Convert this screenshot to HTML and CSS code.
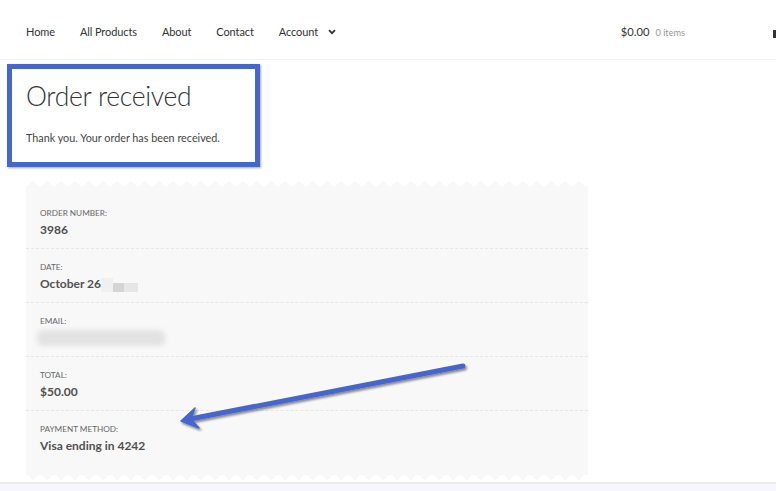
FILE: index.html
```html
<!DOCTYPE html>
<html>
<head>
<meta charset="utf-8">
<link rel="stylesheet" href="styles.css">
</head>
<body>
<header class="site-header">
  <nav class="nav">
    <a class="nav-item">Home</a>
    <a class="nav-item">All Products</a>
    <a class="nav-item">About</a>
    <a class="nav-item">Contact</a>
    <a class="nav-item nav-account">Account
      <svg class="chev" width="8" height="6" viewBox="0 0 8 6"><path d="M1 1.2 L4 4.2 L7 1.2" fill="none" stroke="#333" stroke-width="1.8"/></svg>
    </a>
  </nav>
  <div class="cart">
    <span class="cart-amount">$0.00</span>
    <span class="cart-count">0 items</span>
  </div>
  <span class="cart-icon"></span>
</header>

<main class="content">
  <div class="highlight">
    <h1 class="title">Order received</h1>
    <p class="thanks">Thank you. Your order has been received.</p>
  </div>

  <section class="receipt">
    <div class="row">
      <div class="label">Order number:</div>
      <div class="value">3986</div>
    </div>
    <div class="row">
      <div class="label">Date:</div>
      <div class="value">October 26<span class="pix"><i class="p1"></i><i class="p2"></i><i class="p3"></i></span></div>
    </div>
    <div class="row">
      <div class="label">Email:</div>
      <div class="value"><span class="blur"></span></div>
    </div>
    <div class="row">
      <div class="label">Total:</div>
      <div class="value">$50.00</div>
    </div>
    <div class="row">
      <div class="label">Payment method:</div>
      <div class="value">Visa ending in 4242</div>
    </div>
  </section>
</main>

<footer class="footer"></footer>

<svg class="arrow" width="776" height="491" viewBox="0 0 776 491">
  <defs>
    <filter id="sh" x="-10%" y="-10%" width="130%" height="140%">
      <feDropShadow dx="1.5" dy="2" stdDeviation="1.2" flood-color="#000" flood-opacity="0.45"/>
    </filter>
  </defs>
  <g filter="url(#sh)">
    <line x1="463" y1="366" x2="190" y2="419" stroke="#4766cc" stroke-width="5" stroke-linecap="round"/>
    <path d="M181 421 L195 408 L191 419 L199 428 Z" fill="#4766cc" stroke="#4766cc" stroke-width="1.5" stroke-linejoin="round"/>
  </g>
</svg>
</body>
</html>
```

FILE: styles.css
```css
* { box-sizing: border-box; }
html, body { margin: 0; padding: 0; }
body {
  width: 776px;
  height: 491px;
  overflow: hidden;
  background: #fff;
  font-family: "Lato", "Open Sans", "Liberation Sans", sans-serif;
  color: #333;
  position: relative;
}

.site-header {
  height: 60px;
  border-bottom: 1px solid #f0f0f0;
  display: flex;
  align-items: center;
  padding-left: 26px;
  padding-top: 4px;
}
.nav {
  display: flex;
  align-items: center;
  gap: 25px;
}
.nav-item {
  font-size: 11px;
  letter-spacing: -0.1px;
  color: #333;
  text-decoration: none;
  display: flex;
  align-items: center;
}
.chev { margin-left: 10px; }
.cart {
  margin-left: auto;
  display: flex;
  align-items: baseline;
  gap: 6px;
  margin-right: 88px;
}
.cart-amount { font-size: 11.2px; color: #333; }
.cart-count { font-size: 9.2px; color: #999; }
.cart-icon {
  width: 3px;
  height: 8px;
  background: #333;
  margin-top: 4px;
}

.content {
  padding: 4px 0 0 7px;
}
.highlight {
  width: 253px;
  height: 103px;
  border: 5px solid #4766cc;
  box-shadow: 1px 1px 2px rgba(0,0,0,0.35);
  padding: 9px 0 0 14px;
}
.title {
  margin: 0;
  font-size: 26.5px;
  font-weight: 300;
  line-height: 36px;
  color: #333;
  letter-spacing: -0.3px;
}
.thanks {
  margin: 16px 0 0;
  font-size: 10.8px;
  line-height: 16px;
  color: #444;
}

.receipt {
  margin: 20px 0 0 19px;
  width: 562px;
  background: #f8f8f8;
  position: relative;
  padding: 5px 0 6px;
}
.receipt::before,
.receipt::after {
  content: "";
  position: absolute;
  left: 0;
  right: 0;
  height: 6px;
  background-size: 14px 6px;
  background-repeat: repeat-x;
}
.receipt::before {
  top: -6px;
  background-image: conic-gradient(from 130deg at 50% 0%, #f8f8f8 100deg, transparent 0);
}
.receipt::after {
  bottom: -6px;
  background-image: conic-gradient(from -50deg at 50% 100%, #f8f8f8 100deg, transparent 0);
}

.row {
  padding: 12px 14px 8px;
  border-top: 1px dashed #e6e6e6;
}
.row:first-child {
  border-top: none;
  padding-top: 15px;
}
.row:last-child { padding-bottom: 12px; }
.label {
  font-size: 8.2px;
  line-height: 12px;
  text-transform: uppercase;
  color: #666;
}
.value {
  font-size: 12px;
  line-height: 20px;
  font-weight: 700;
  color: #505050;
  margin-top: 1px;
  display: flex;
  align-items: center;
}
.pix {
  display: inline-flex;
  align-items: flex-end;
  margin-left: 0;
  height: 16px;
}
.pix i { display: block; }
.pix .p1 { width: 12px; height: 14px; background: #f0f0f0; }
.pix .p2 { width: 11px; height: 9px; background: #d4d4d4; }
.pix .p3 { width: 14px; height: 9px; background: #e6e6e6; }
.blur {
  display: block;
  width: 128px;
  height: 16px;
  margin: 2px 0 2px -3px;
  background: #e2e2e2;
  border-radius: 6px;
  filter: blur(2.5px);
}

.footer {
  margin-top: 8px;
  height: 10px;
  border-top: 2px solid #ececec;
  background: #f6f6fc;
}

.arrow {
  position: absolute;
  left: 0;
  top: 0;
  pointer-events: none;
}
```
